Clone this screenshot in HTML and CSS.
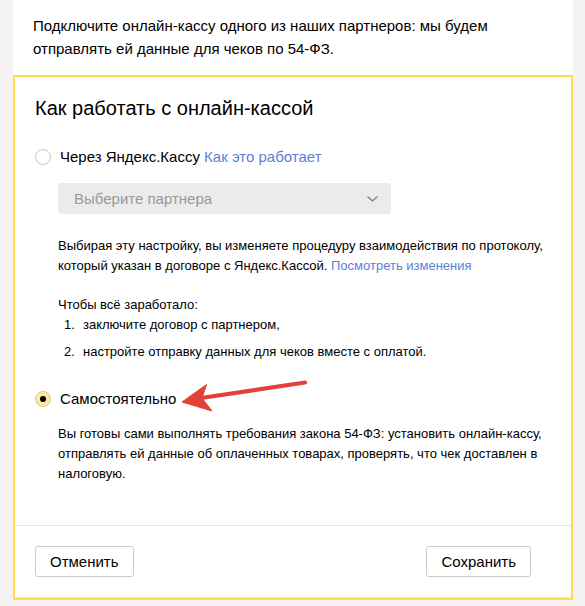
FILE: index.html
```html
<!DOCTYPE html>
<html lang="ru">
<head>
<meta charset="utf-8">
<title>Онлайн-касса</title>
<link rel="stylesheet" href="styles.css">
</head>
<body>
<div class="panel">
  <p class="intro">Подключите онлайн-кассу одного из наших партнеров: мы будем отправлять ей данные для чеков по 54-ФЗ.</p>
  <section class="box">
    <div class="box-body">
      <h2 class="title">Как работать с онлайн-кассой</h2>

      <div class="option option-first">
        <div class="radio-row">
          <span class="radio"></span>
          <span class="label">Через Яндекс.Кассу <a class="link" href="#">Как это работает</a></span>
        </div>
        <div class="option-body">
          <div class="select">
            <span class="select-text">Выберите партнера</span>
            <svg class="chevron" width="11" height="6" viewBox="0 0 11 6"><path d="M0.5 0.5 L5.5 5 L10.5 0.5" fill="none" stroke="#7a7a7a" stroke-width="1.2"/></svg>
          </div>
          <p class="note note-first">Выбирая эту настройку, вы изменяете процедуру взаимодействия по протоколу, который указан в договоре с Яндекс.Кассой. <a class="link" href="#">Посмотреть изменения</a></p>
          <p class="note note-gap">Чтобы всё заработало:</p>
          <ol class="steps">
            <li class="step"><span class="step-num">1.</span><span>заключите договор с партнером,</span></li>
            <li class="step"><span class="step-num">2.</span><span>настройте отправку данных для чеков вместе с оплатой.</span></li>
          </ol>
        </div>
      </div>

      <div class="option option-second">
        <div class="radio-row">
          <span class="radio radio-checked"></span>
          <span class="label">Самостоятельно</span>
          <svg class="arrow" width="140" height="42" viewBox="0 0 140 42">
            <line x1="26" y1="22" x2="130" y2="6.5" stroke="#e4403a" stroke-width="4.2" stroke-linecap="round"/>
            <path d="M7 26 L31.5 8.5 L27 22 L37 35 Z" fill="#e4403a" stroke="#e4403a" stroke-width="1" stroke-linejoin="round"/>
          </svg>
        </div>
        <div class="option-body">
          <p class="note note-second">Вы готовы сами выполнять требования закона 54-ФЗ: установить онлайн-кассу, отправлять ей данные об оплаченных товарах, проверять, что чек доставлен в налоговую.</p>
        </div>
      </div>
    </div>
    <div class="footer">
      <button class="btn" type="button">Отменить</button>
      <button class="btn" type="button">Сохранить</button>
    </div>
  </section>
</div>
</body>
</html>
```

FILE: styles.css
```css
html, body {
  margin: 0;
  padding: 0;
  background: #f4f3f1;
}
body {
  font-family: "Liberation Sans", Arial, sans-serif;
  color: #000;
}
.panel {
  width: 560px;
  margin-left: 13px;
  background: #fff;
  min-height: 600px;
}
.intro {
  margin: 0;
  padding: 14px 20px 15px 20px;
  font-size: 15px;
  line-height: 23px;
}
.box {
  border: 2px solid #ffdb4d;
}
.box-body {
  padding: 19px 20px 41px 20px;
}
.title {
  margin: 0;
  font-size: 20px;
  line-height: 24px;
  font-weight: normal;
}
.option-first {
  margin-top: 27px;
}
.option-second {
  margin-top: 27px;
}
.radio-row {
  position: relative;
  display: flex;
  align-items: center;
  font-size: 15px;
  line-height: 20px;
}
.radio {
  box-sizing: border-box;
  width: 16px;
  height: 16px;
  border-radius: 50%;
  border: 1px solid #c6c6c6;
  background: #fff;
  margin-right: 9px;
  flex: none;
  display: flex;
  align-items: center;
  justify-content: center;
}
.radio-checked {
  background: #ffe9a0;
  border-color: #d9c98e;
}
.radio-checked::after {
  content: "";
  width: 6px;
  height: 6px;
  border-radius: 50%;
  background: #000;
}
.link {
  color: #5b7fd9;
  text-decoration: none;
}
.arrow {
  position: absolute;
  left: 140px;
  top: -13px;
}
.option-body {
  padding-left: 23px;
}
.select {
  margin-top: 16px;
  width: 333px;
  height: 31px;
  box-sizing: border-box;
  background: #ebebeb;
  border-radius: 3px;
  display: flex;
  align-items: center;
  justify-content: space-between;
  padding: 0 13px 0 16px;
}
.select-text {
  font-size: 15px;
  color: #999;
}
.chevron {
  display: block;
}
.note {
  margin: 0;
  font-size: 13px;
  line-height: 20px;
}
.note-first {
  margin-top: 22px;
}
.note-gap {
  margin-top: 19px;
}
.note-second {
  margin-top: 15px;
}
.steps {
  margin: 0;
  padding: 0;
  list-style: none;
  font-size: 13px;
  line-height: 20px;
}
.step {
  display: flex;
}
.step + .step {
  margin-top: 7px;
}
.step-num {
  width: 19px;
  padding-left: 6px;
  flex: none;
}
.footer {
  border-top: 1px solid #e5e5e5;
  border-bottom: 1px solid #e2e8e8;
  padding: 20px 40px 20px 20px;
  display: flex;
  justify-content: space-between;
}
.btn {
  height: 31px;
  padding: 0 14px;
  background: #fff;
  border: 1px solid #ccc;
  border-radius: 3px;
  font-family: "Liberation Sans", Arial, sans-serif;
  font-size: 15px;
  color: #000;
}
```
